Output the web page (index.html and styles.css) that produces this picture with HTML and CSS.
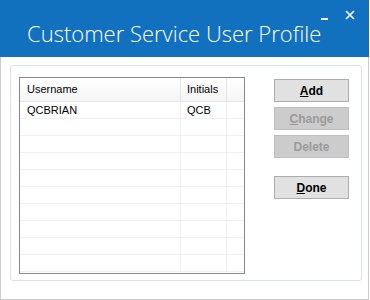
FILE: index.html
```html
<!DOCTYPE html>
<html lang="en">
<head>
  <meta charset="UTF-8">
  <title>Customer Service User Profile</title>
  <link rel="stylesheet" href="styles.css">
</head>
<body>
  <div class="window">
    <div class="titlebar">
      <span class="title">Customer Service User Profile</span>
      <div class="controls">
        <span class="min"></span>
        <svg class="close" width="10" height="10" viewBox="0 0 10 10">
          <path d="M1 1 L9 9 M9 1 L1 9" stroke="#fff" stroke-width="1.6"/>
        </svg>
      </div>
    </div>

    <div class="content">
      <div class="group">
        <div class="list">
          <div class="row header">
            <div class="cell">Username</div>
            <div class="cell">Initials</div>
            <div class="cell"></div>
          </div>
          <div class="row">
            <div class="cell">QCBRIAN</div>
            <div class="cell">QCB</div>
            <div class="cell"></div>
          </div>
          <div class="row"><div class="cell"></div><div class="cell"></div><div class="cell"></div></div>
          <div class="row"><div class="cell"></div><div class="cell"></div><div class="cell"></div></div>
          <div class="row"><div class="cell"></div><div class="cell"></div><div class="cell"></div></div>
          <div class="row"><div class="cell"></div><div class="cell"></div><div class="cell"></div></div>
          <div class="row"><div class="cell"></div><div class="cell"></div><div class="cell"></div></div>
          <div class="row"><div class="cell"></div><div class="cell"></div><div class="cell"></div></div>
          <div class="row"><div class="cell"></div><div class="cell"></div><div class="cell"></div></div>
          <div class="row"><div class="cell"></div><div class="cell"></div><div class="cell"></div></div>
          <div class="row"><div class="cell"></div><div class="cell"></div><div class="cell"></div></div>
        </div>

        <div class="buttons">
          <button class="btn"><u>A</u>dd</button>
          <button class="btn" disabled><u>C</u>hange</button>
          <button class="btn" disabled>Delete</button>
          <button class="btn done"><u>D</u>one</button>
        </div>
      </div>
    </div>
  </div>
</body>
</html>
```

FILE: styles.css
```css
body {
  margin: 0;
  background: #ffffff;
  font-family: "Liberation Sans", Arial, sans-serif;
}
.window {
  width: 367px;
  height: 299px;
  border: 1px solid #cccccc;
  border-top: none;
  background: #ffffff;
}
.titlebar {
  height: 57px;
  margin: 0 -1px;
  background: #1171be;
  display: flex;
  position: relative;
}
.title {
  color: #ffffff;
  font-family: "Open Sans", sans-serif;
  font-weight: 300;
  font-size: 22px;
  margin: 18px 0 0 27px;
  line-height: 30px;
}
.controls {
  position: absolute;
  top: 10px;
  right: 14px;
  display: flex;
  align-items: flex-start;
  gap: 17px;
}
.min {
  width: 7px;
  height: 2px;
  margin-top: 8px;
  background: #ffffff;
}
.close {
  display: block;
}
.content {
  padding: 8px 0 0 9px;
}
.group {
  width: 350px;
  height: 214px;
  border: 1px solid #d8e2e9;
  border-radius: 3px;
  display: flex;
  padding: 0;
}
.list {
  width: 224px;
  height: 195px;
  margin: 11px 0 0 8px;
  border: 1px solid #828790;
  overflow: hidden;
  font-size: 11px;
  color: #000;
}
.row {
  display: flex;
  height: 16px;
  border-bottom: 1px solid #f0f0f0;
}
.row.header {
  height: 23px;
  border-bottom: 1px solid #e5e5e5;
  background: linear-gradient(#ffffff, #f4f4f4);
}
.cell {
  line-height: 16px;
  padding-left: 7px;
  box-sizing: border-box;
  border-right: 1px solid #f0f0f0;
}
.header .cell {
  line-height: 23px;
  border-right: 1px solid #e5e5e5;
}
.cell:nth-child(1) { width: 161px; }
.cell:nth-child(2) { width: 46px; padding-left: 6px; }
.cell:nth-child(3) { flex: 1; border-right: none; }
.buttons {
  display: flex;
  flex-direction: column;
  gap: 5px;
  margin: 13px 0 0 29px;
}
.btn {
  width: 75px;
  height: 23px;
  padding: 0;
  border: 1px solid #adadad;
  background: #e1e1e1;
  color: #000;
  font-family: "Liberation Sans", Tahoma, sans-serif;
  font-size: 12px;
  font-weight: bold;
}
.btn:disabled {
  background: #cccccc;
  border-color: #bfbfbf;
  color: #9a9a9a;
}
.btn u {
  text-decoration-thickness: 1px;
}
.done {
  margin-top: 13px;
}
```
